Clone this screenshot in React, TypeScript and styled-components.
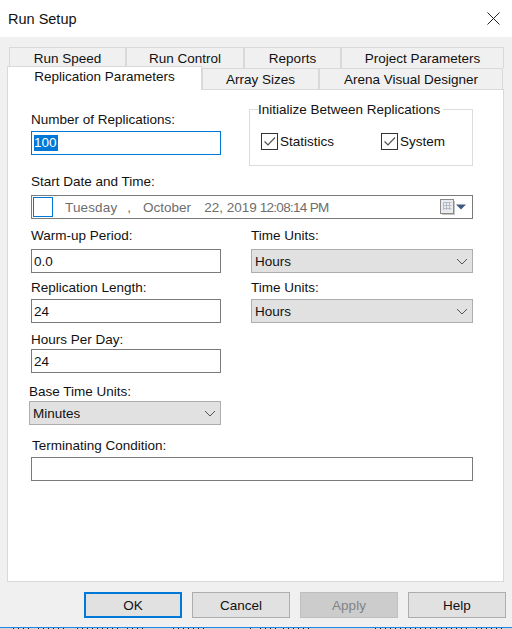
import React from "react";
import styled, { createGlobalStyle } from "styled-components";

const Global = createGlobalStyle`
  html, body { margin: 0; padding: 0; background: #f0f0f0; }
  #root { width: 512px; height: 629px; overflow: hidden; }
  * { box-sizing: border-box; }
`;

const Dialog = styled.div`
  width: 512px;
  height: 629px;
  display: flex;
  flex-direction: column;
  background: #f0f0f0;
  font-family: "Liberation Sans", Arial, sans-serif;
  font-size: 13.5px;
  color: #111;
  overflow: hidden;
`;

const TitleBar = styled.div`
  height: 37px;
  flex: none;
  background: #fff;
  display: flex;
  align-items: center;
  justify-content: space-between;
  padding: 0 12px 0 8px;
`;

const Title = styled.span`
  font-size: 14.5px;
  color: #111;
`;

const Body = styled.div`
  flex: 1;
  display: flex;
  flex-direction: column;
  padding: 10px 8px 0 7px;
`;

const TabRow = styled.div<{ $pad: number; $height: number }>`
  display: flex;
  height: ${(p) => p.$height}px;
  padding-left: ${(p) => p.$pad}px;
  align-items: flex-end;
`;

const BackTab = styled.div<{ $w: number }>`
  width: ${(p) => p.$w}px;
  height: 100%;
  flex: none;
  background: #f0f0f0;
  border: 1px solid #d9d9d9;
  border-bottom: 0;
  display: flex;
  align-items: center;
  justify-content: center;
`;

const ActiveTab = styled.div`
  width: 195px;
  height: 24px;
  flex: none;
  background: #fff;
  border: 1px solid #d9d9d9;
  border-bottom: 0;
  margin-bottom: -1px;
  position: relative;
  z-index: 1;
  display: flex;
  align-items: flex-start;
  justify-content: center;
  padding-top: 2px;
`;

const Panel = styled.div`
  width: 497px;
  height: 493px;
  flex: none;
  background: #fff;
  border: 1px solid #d9d9d9;
  padding: 19px 30px 0 23px;
  display: flex;
  flex-direction: column;
`;

const TopBlock = styled.div`
  display: flex;
  justify-content: space-between;
  height: 57px;
`;

const Field = styled.div<{ $w?: number; $x?: number; $top?: number }>`
  display: flex;
  flex-direction: column;
  width: ${(p) => (p.$w ? `${p.$w}px` : "auto")};
  margin-left: ${(p) => p.$x ?? 0}px;
  margin-top: ${(p) => p.$top ?? 0}px;
`;

const Label = styled.label<{ $y?: number; $x?: number }>`
  height: 22px;
  line-height: 18px;
  padding-top: ${(p) => p.$y ?? 0}px;
  padding-left: ${(p) => p.$x ?? 0}px;
  white-space: nowrap;
`;

const TextBox = styled.div`
  height: 24px;
  border: 1px solid #7a7a7a;
  background: #fff;
  padding: 0 2px;
  display: flex;
  align-items: center;
`;

const FocusBox = styled(TextBox)`
  border-color: #0078d7;
`;

const Selected = styled.span`
  background: #0078d7;
  color: #fff;
  height: 16px;
  line-height: 16px;
  padding-right: 1px;
`;

const Group = styled.fieldset`
  width: 224px;
  height: 57px;
  margin: 0;
  padding: 0 8px;
  border: 1px solid #dcdcdc;
  position: relative;
`;

const Legend = styled.span`
  position: absolute;
  top: -8px;
  left: 8px;
  background: #fff;
  padding-right: 3px;
  line-height: 16px;
`;

const Checks = styled.div`
  display: flex;
  padding: 23px 0 0 3px;
`;

const Check = styled.div<{ $w: number }>`
  width: ${(p) => p.$w}px;
  display: flex;
  align-items: center;
  gap: 2px;
  height: 17px;
`;

const Box = styled.span`
  width: 17px;
  height: 17px;
  flex: none;
  border: 1px solid #333;
  background: #fff;
  display: flex;
  align-items: center;
  justify-content: center;
`;

const DateBox = styled.div`
  height: 24px;
  width: 442px;
  border: 1px solid #7a7a7a;
  background: #fff;
  display: flex;
  align-items: center;
  padding-left: 1px;
  color: #6d6d6d;
  white-space: nowrap;
`;

const DateCheck = styled.span`
  width: 20px;
  height: 20px;
  flex: none;
  border: 1px solid #0078d7;
`;

const DatePart = styled.span<{ $x: number; $track?: number }>`
  margin-left: ${(p) => p.$x}px;
  letter-spacing: ${(p) => p.$track ?? 0}px;
`;

const CalendarPicker = styled.span`
  margin-left: auto;
  margin-right: 6px;
  display: flex;
`;

const Row = styled.div<{ $top?: number }>`
  display: flex;
  margin-top: ${(p) => p.$top ?? 0}px;
`;

const Combo = styled.div<{ $w: number }>`
  width: ${(p) => p.$w}px;
  height: 24px;
  background: #e1e1e1;
  border: 1px solid #adadad;
  display: flex;
  align-items: center;
  justify-content: space-between;
  padding: 0 4px 0 3px;
`;

const Footer = styled.div`
  display: flex;
  gap: 10px;
  padding: 10px 0 0 77px;
  width: 505px;
  flex: none;
`;

const Button = styled.button<{ $kind?: "default" | "disabled" }>`
  width: 98px;
  height: 26px;
  padding: 0;
  font: inherit;
  color: ${(p) => (p.$kind === "disabled" ? "#838383" : "#111")};
  background: ${(p) => (p.$kind === "disabled" ? "#cccccc" : "#e1e1e1")};
  border: ${(p) =>
    p.$kind === "default"
      ? "2px solid #0078d7"
      : p.$kind === "disabled"
        ? "1px solid #bfbfbf"
        : "1px solid #adadad"};
`;

const Spacer = styled.div`
  flex: 1;
`;

const BottomEdge = styled.div`
  height: 2px;
  flex: none;
  border-top: 1px solid #1e88e5;
  background: #d4d4d4;
  display: flex;
`;

const TICK_RANGES: [number, number][] = [
  [13, 28], [38, 66], [77, 118], [127, 146], [173, 205], [250, 252],
  [260, 277], [283, 309], [375, 430], [436, 470], [476, 504],
];

const tickPath = TICK_RANGES.map(([from, to]) => {
  let d = "";
  for (let x = from; x <= to; x += 5) d += `M${x + 0.5} 0v1`;
  return d;
}).join("");

const Ticks = () => (
  <svg width="512" height="1" viewBox="0 0 512 1">
    <path d={tickPath} stroke="#222" strokeWidth="1" />
  </svg>
);

const Chevron = () => (
  <svg width="12" height="7" viewBox="0 0 12 7" fill="none">
    <path d="M1 1l5 5 5-5" stroke="#555" strokeWidth="1" />
  </svg>
);

const Tick = () => (
  <svg width="13" height="11" viewBox="0 0 13 11" fill="none">
    <path d="M1.5 5.5l3.5 3.5 7-7.5" stroke="#555" strokeWidth="1.2" />
  </svg>
);

const Close = () => (
  <svg width="13" height="13" viewBox="0 0 13 13" fill="none">
    <path d="M.5.5l12 12M12.5.5l-12 12" stroke="#222" strokeWidth="1" />
  </svg>
);

const Calendar = () => (
  <svg width="26" height="16" viewBox="0 0 26 16" fill="none">
    <rect x="0.5" y="0.5" width="13" height="14" fill="#ececec" stroke="#8a8a8a" />
    <path d="M14.5 2v13.5H2" stroke="#c4c4c4" />
    <path d="M3 3.5h8.5M3 6.5h8.5M3 9.5h8.5M3.5 3v8M6.5 3v8M9.5 3v8" stroke="#b3bcc8" />
    <path d="M16 5.5h10l-5 5z" fill="#3e5a80" />
  </svg>
);

export default function App() {
  return (
    <Dialog>
      <Global />
      <TitleBar>
        <Title>Run Setup</Title>
        <Close />
      </TitleBar>
      <Body>
        <TabRow $pad={2} $height={21}>
          <BackTab $w={117}>Run Speed</BackTab>
          <BackTab $w={118}>Run Control</BackTab>
          <BackTab $w={97}>Reports</BackTab>
          <BackTab $w={163}>Project Parameters</BackTab>
        </TabRow>
        <TabRow $pad={0} $height={21}>
          <ActiveTab>Replication Parameters</ActiveTab>
          <BackTab $w={117}>Array Sizes</BackTab>
          <BackTab $w={184}>Arena Visual Designer</BackTab>
        </TabRow>
        <Panel>
          <TopBlock>
            <Field $w={190}>
              <Label $y={2}>Number of Replications:</Label>
              <FocusBox>
                <Selected>100</Selected>
              </FocusBox>
            </Field>
            <Group>
              <Legend>Initialize Between Replications</Legend>
              <Checks>
                <Check $w={120}>
                  <Box>
                    <Tick />
                  </Box>
                  Statistics
                </Check>
                <Check $w={80}>
                  <Box>
                    <Tick />
                  </Box>
                  System
                </Check>
              </Checks>
            </Group>
          </TopBlock>
          <Field $top={7}>
            <Label>Start Date and Time:</Label>
            <DateBox>
              <DateCheck />
              <DatePart $x={12} $track={0.15}>Tuesday</DatePart>
              <DatePart $x={10}>,</DatePart>
              <DatePart $x={12}>October</DatePart>
              <DatePart $x={13}>22, 2019</DatePart>
              <DatePart $x={3} $track={-0.7}>12:08:14 PM</DatePart>
              <CalendarPicker>
                <Calendar />
              </CalendarPicker>
            </DateBox>
          </Field>
          <Row $top={8}>
            <Field $w={190}>
              <Label>Warm-up Period:</Label>
              <TextBox>0.0</TextBox>
            </Field>
            <Field $w={222} $x={30}>
              <Label>Time Units:</Label>
              <Combo $w={222}>
                Hours
                <Chevron />
              </Combo>
            </Field>
          </Row>
          <Row $top={4}>
            <Field $w={190}>
              <Label $y={2}>Replication Length:</Label>
              <TextBox>24</TextBox>
            </Field>
            <Field $w={222} $x={30}>
              <Label $y={2}>Time Units:</Label>
              <Combo $w={222}>
                Hours
                <Chevron />
              </Combo>
            </Field>
          </Row>
          <Field $w={190} $top={4}>
            <Label $y={4}>Hours Per Day:</Label>
            <TextBox>24</TextBox>
          </Field>
          <Field $w={192} $x={-2} $top={6}>
            <Label $y={4}>Base Time Units:</Label>
            <Combo $w={192}>
              Minutes
              <Chevron />
            </Combo>
          </Field>
          <Field $w={442} $top={10}>
            <Label $y={2} $x={1}>Terminating Condition:</Label>
            <TextBox />
          </Field>
        </Panel>
        <Footer>
          <Button $kind="default">OK</Button>
          <Button>Cancel</Button>
          <Button $kind="disabled">Apply</Button>
          <Button>Help</Button>
        </Footer>
        <Spacer />
      </Body>
      <BottomEdge>
        <Ticks />
      </BottomEdge>
    </Dialog>
  );
}
